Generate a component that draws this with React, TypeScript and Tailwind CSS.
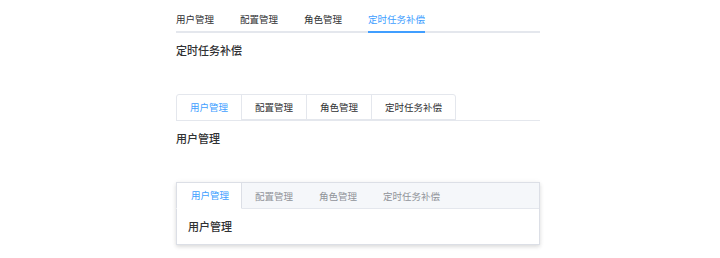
import React, { useState } from 'react';

const tabs = [
	{ key: 'user', label: '用户管理' },
	{ key: 'config', label: '配置管理' },
	{ key: 'role', label: '角色管理' },
	{ key: 'task', label: '定时任务补偿' },
];

const font = { fontFamily: '"Noto Sans CJK SC", "Noto Sans", sans-serif' };

// Plain tabs with the blue underline
const LineTabs: React.FC = () => {
	const [active, setActive] = useState('task');
	const current = tabs.find(t => t.key === active);

	return (
		<div>
			<div className="flex h-[28px] border-b-2 border-[#e4e7ed]">
				{tabs.map((t, i) => (
					<div
						key={t.key}
						onClick={() => setActive(t.key)}
						className={`-mb-[2px] flex cursor-pointer text-[9.5px] ${
							i === 0 ? 'pr-[13px]' : i === tabs.length - 1 ? 'pl-[13px]' : 'px-[13px]'
						}`}
					>
						<span
							className={`flex items-center border-b-2 pt-[2px] ${
								active === t.key ? 'border-[#409eff] text-[#409eff]' : 'border-transparent text-[#303133]'
							}`}
						>
							{t.label}
						</span>
					</div>
				))}
			</div>
			<div className="mt-[9px] text-[11px] leading-[16px] font-medium text-[#303133]">{current?.label}</div>
		</div>
	);
};

// Card style tabs
const CardTabs: React.FC = () => {
	const [active, setActive] = useState('user');
	const current = tabs.find(t => t.key === active);

	return (
		<div>
			<div className="flex border-b border-[#e4e7ed]">
				<div className="-mb-px flex rounded-t-[3px] border border-[#e4e7ed]">
					{tabs.map((t, i) => (
						<div
							key={t.key}
							onClick={() => setActive(t.key)}
							className={`flex h-[25px] cursor-pointer items-center px-[13px] text-[9.5px] ${
								i > 0 ? 'border-l border-[#e4e7ed]' : ''
							} ${active === t.key ? 'border-b border-b-white text-[#409eff]' : 'border-b border-b-[#e4e7ed] text-[#303133]'}`}
						>
							{t.label}
						</div>
					))}
				</div>
			</div>
			<div className="mt-[9px] text-[11px] leading-[16px] font-medium text-[#303133]">{current?.label}</div>
		</div>
	);
};

// Border card tabs
const BorderCardTabs: React.FC = () => {
	const [active, setActive] = useState('user');
	const current = tabs.find(t => t.key === active);

	return (
		<div className="border border-[#dcdfe6] bg-white shadow-[0_2px_4px_rgba(0,0,0,0.12),0_0_6px_rgba(0,0,0,0.04)]">
			<div className="flex border-b border-[#e4e7ed] bg-[#f5f7fa]">
				{tabs.map((t, i) => (
					<div
						key={t.key}
						onClick={() => setActive(t.key)}
						className={`-mb-px flex h-[26px] cursor-pointer items-center border-x px-[12px] text-[9.5px] ${
							i === 0 ? '-ml-px pl-[14px]' : ''
						} ${
							active === t.key
								? 'border-x-[#dcdfe6] border-b border-b-white bg-white text-[#409eff]'
								: 'border-x-transparent text-[#909399]'
						}`}
					>
						{t.label}
					</div>
				))}
			</div>
			<div className="px-[11px] pt-[9px] pb-[10px] text-[11px] leading-[16px] font-medium text-[#303133]">{current?.label}</div>
		</div>
	);
};

const App: React.FC = () => {
	return (
		<div className="min-h-[258px] bg-white" style={font}>
			<div className="ml-[176px] w-[364px] pt-[5px]">
				<LineTabs />
				<div className="mt-[36px]">
					<CardTabs />
				</div>
				<div className="mt-[36px]">
					<BorderCardTabs />
				</div>
			</div>
		</div>
	);
};

export default App;
